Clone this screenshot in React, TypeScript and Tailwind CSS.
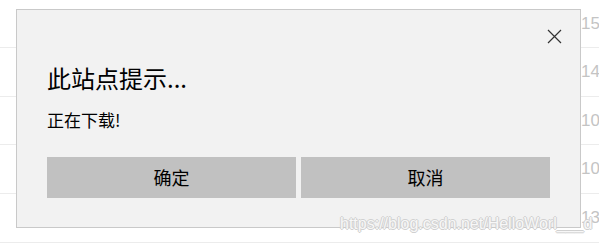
import React from "react";

const rows = [
  { n: "15", h: "h-[48px]" },
  { n: "14", h: "h-[49px]" },
  { n: "10", h: "h-[48px]" },
  { n: "10", h: "h-[49px]" },
  { n: "13", h: "h-[49px]" },
];

const cjk = { fontFamily: '"Noto Sans CJK SC", "Noto Sans", sans-serif' };

const App = () => {
  return (
    <div className="relative w-[599px] h-[244px] overflow-hidden bg-white">
      {/* page behind the dialog */}
      <div className="flex flex-col">
        {rows.map((r, i) => (
          <div
            key={i}
            className={`${r.h} border-b border-[#ececec] flex items-center pl-[581px] text-[17px] text-[#c4c4c4] font-['Liberation_Sans',sans-serif]`}
          >
            {r.n}
          </div>
        ))}
      </div>

      {/* dialog */}
      <div
        className="absolute left-[16px] top-[9px] w-[565px] h-[219px] bg-[#f2f2f2] border border-[#c9c9c9] flex flex-col px-[30px]"
        style={cjk}
      >
        <div className="flex justify-end pt-[19px] -mr-[12px] h-[54px]">
          <svg width="15" height="15" viewBox="0 0 15 15" className="text-[#333]">
            <path d="M1 1L14 14M14 1L1 14" stroke="currentColor" strokeWidth="1.2" fill="none" />
          </svg>
        </div>
        <h1 className="text-[24px] leading-[28px] text-black">此站点提示...</h1>
        <p className="mt-[17px] text-[17px] leading-[22px] text-black">正在下载!</p>
        <div className="mt-[26px] flex gap-[5px]">
          <button className="w-[249px] h-[41px] bg-[#c1c1c1] text-[18px] text-black">确定</button>
          <button className="w-[249px] h-[41px] bg-[#c1c1c1] text-[18px] text-black">取消</button>
        </div>
      </div>

      {/* watermark */}
      <div className="absolute left-[340px] top-[215px] text-[16px] leading-[18px] whitespace-nowrap text-[#f7f7f7] font-['Liberation_Sans',sans-serif] [text-shadow:1px_0_0_#d0d0d0,-1px_0_0_#d0d0d0,0_1px_0_#d0d0d0,0_-1px_0_#d0d0d0]">
        https://blog.csdn.net/HelloWorl___d
      </div>
    </div>
  );
};

export default App;
